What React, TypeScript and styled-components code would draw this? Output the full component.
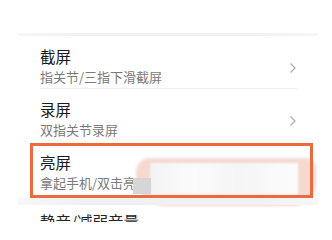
import styled, { createGlobalStyle } from "styled-components";

const GlobalStyle = createGlobalStyle`
  html, body {
    margin: 0;
    padding: 0;
    background: #ffffff;
  }
  body {
    font-family: "Noto Sans CJK SC", "Noto Sans", sans-serif;
  }
`;

const Page = styled.div`
  display: flex;
  flex-direction: column;
  width: 332px;
  height: 240px;
  overflow: hidden;
  padding-top: 33px;
  box-sizing: border-box;
  background: #fff;
`;

const Band = styled.div<{ $h: number; $gap?: number }>`
  flex: none;
  height: ${(p) => p.$h}px;
  margin: ${(p) => p.$gap ?? 0}px 14px 0 18px;
  background: linear-gradient(90deg, #f7f7f7, #f1f1f1 20%, #f1f1f1 80%, #f7f7f7);
  filter: blur(0.6px);
`;

const List = styled.div`
  position: relative;
  display: flex;
  flex-direction: column;
  padding: 0 35px 0 40px;
`;

const Row = styled.div<{ $divider?: boolean }>`
  display: flex;
  align-items: flex-start;
  height: 53px;
  padding-top: 10px;
  box-sizing: border-box;
  border-bottom: ${(p) => (p.$divider ? "1px solid #ededed" : "none")};
`;

const RowText = styled.div`
  flex: 1;
  min-width: 0;
`;

const Title = styled.div`
  font-size: 15.5px;
  line-height: 20px;
  color: #1a1a1a;
`;

const Sub = styled.div`
  font-size: 13px;
  line-height: 22px;
  color: #7a7a7a;
  white-space: nowrap;
`;

const Chevron = styled.svg`
  width: 8px;
  height: 12px;
  margin-top: 16px;
  flex: none;
`;

/* annotation frame drawn over the third row */
const Highlight = styled.div`
  position: absolute;
  left: 30px;
  top: 107px;
  width: 283px;
  height: 55px;
  border: 3px solid #ec6a3f;
  box-sizing: border-box;
  pointer-events: none;
`;

/* blurred-out patch covering the rest of the subtitle */
const Smudge = styled.div`
  position: absolute;
  left: 136px;
  top: 122px;
  width: 180px;
  height: 48px;
  border-radius: 14px 10px 22px 30px;
  background: #f5d9cf;
  filter: blur(1.5px);
`;

const SmudgeLight = styled.div`
  position: absolute;
  left: 150px;
  top: 127px;
  width: 148px;
  height: 32px;
  background: linear-gradient(90deg, #f3f3f3, #fbfbfb 30%, #f5f5f5 60%, #fcfcfc);
  filter: blur(1px);
`;

const SmudgeGray = styled.div`
  position: absolute;
  left: 133px;
  top: 142px;
  width: 18px;
  height: 16px;
  background: #d6d6d6;
  filter: blur(0.6px);
`;

const Footer = styled.div`
  flex: none;
  height: 11px;
  margin-top: 6px;
  padding-left: 40px;
  overflow: hidden;
`;

const FooterText = styled.div`
  font-size: 15.5px;
  line-height: 20px;
  color: #222;
`;

const Arrow = () => (
  <Chevron viewBox="0 0 8 12">
    <path d="M1.5 1.5 L6 6 L1.5 10.5" fill="none" stroke="#b0b0b0" strokeWidth="1.3" />
  </Chevron>
);

const items = [
  { title: "截屏", sub: "指关节/三指下滑截屏", arrow: true, divider: true },
  { title: "录屏", sub: "双指关节录屏", arrow: true, divider: false },
  { title: "亮屏", sub: "拿起手机/双击亮屏", arrow: false, divider: false },
];

export default function App() {
  return (
    <Page>
      <GlobalStyle />
      <Band $h={3} />
      <List>
        {items.map((it) => (
          <Row key={it.title} $divider={it.divider}>
            <RowText>
              <Title>{it.title}</Title>
              <Sub>{it.sub}</Sub>
            </RowText>
            {it.arrow && <Arrow />}
          </Row>
        ))}
        <Smudge />
        <SmudgeLight />
        <SmudgeGray />
        <Highlight />
      </List>
      <Band $h={7} $gap={3} />
      <Footer>
        <FooterText>静音/减弱音量</FooterText>
      </Footer>
    </Page>
  );
}
